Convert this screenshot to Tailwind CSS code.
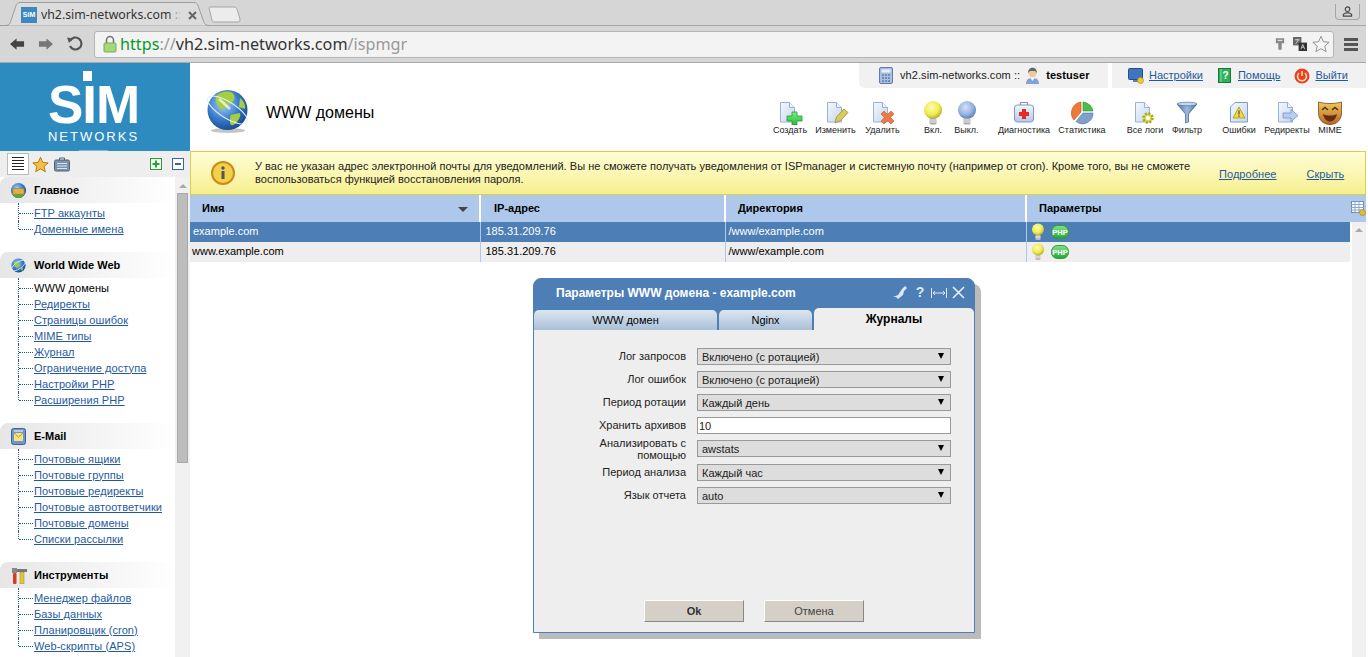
<!DOCTYPE html>
<html lang="ru">
<head>
    <meta charset="UTF-8">
    <meta name="viewport" content="width=device-width, initial-scale=1.0">
    <title>WWW домены</title>
    <script src="https://cdn.jsdelivr.net/npm/@tailwindcss/browser@4"></script>
</head>
<body class="bg-white h-[657px] overflow-hidden font-['Liberation_Sans',sans-serif] text-[11px] text-black">

    <!-- shared icon parts -->
    <svg class="absolute w-0 h-0">
        <defs>
            <linearGradient id="paper" x1="0" y1="0" x2="1" y2="1"><stop offset="0" stop-color="#f4f8fd"/><stop offset="1" stop-color="#c3d6ee"/></linearGradient>
            <radialGradient id="yellowBulb" cx="0.42" cy="0.35" r="0.7"><stop offset="0" stop-color="#fdfdb8"/><stop offset="0.6" stop-color="#efeb4c"/><stop offset="1" stop-color="#a8a21c"/></radialGradient>
            <radialGradient id="blueBulb" cx="0.42" cy="0.35" r="0.7"><stop offset="0" stop-color="#d6e2f6"/><stop offset="0.6" stop-color="#92b2e2"/><stop offset="1" stop-color="#4f72ac"/></radialGradient>
            <radialGradient id="earth" cx="0.4" cy="0.35" r="0.75"><stop offset="0" stop-color="#a8d0f4"/><stop offset="0.55" stop-color="#3377c8"/><stop offset="1" stop-color="#123f80"/></radialGradient>
            <linearGradient id="greenBtn" x1="0" y1="0" x2="0" y2="1"><stop offset="0" stop-color="#86e08a"/><stop offset="1" stop-color="#1fa838"/></linearGradient>
            <linearGradient id="greenCross" x1="0" y1="0" x2="0" y2="1"><stop offset="0" stop-color="#7ff07a"/><stop offset="1" stop-color="#22b83c"/></linearGradient>
            <linearGradient id="silver" x1="0" y1="0" x2="0" y2="1"><stop offset="0" stop-color="#f2f6fc"/><stop offset="1" stop-color="#b3c9ea"/></linearGradient>
            <linearGradient id="funnel" x1="0" y1="0" x2="1" y2="0"><stop offset="0" stop-color="#47709f"/><stop offset="0.5" stop-color="#9dbbe0"/><stop offset="1" stop-color="#47709f"/></linearGradient>
            <linearGradient id="mask" x1="0" y1="0" x2="0" y2="1"><stop offset="0" stop-color="#f0c85c"/><stop offset="1" stop-color="#b06a26"/></linearGradient>
            <symbol id="doc" viewBox="0 0 26 26"><path d="M3.500 3.500h9l5 5v14.500h-14z" fill="url(#paper)" stroke="#9ab2d4"/><path d="M12.500 3.500v5h5" fill="#f2f6fc" stroke="#9ab2d4"/></symbol>
            <symbol id="socket" viewBox="0 0 26 26"><rect x="9.500" y="19" width="7" height="6.500" rx="1.500" fill="#a8a8a8"/><path d="M9.500 21h7M9.500 23h7" stroke="#f0f0f0"/></symbol>
            <symbol id="php" viewBox="0 0 18 14"><rect x="0.500" y="0.500" width="17" height="13" rx="6" fill="url(#greenBtn)" stroke="#2f9a3a"/><text x="9" y="10" text-anchor="middle" font-family="Liberation Sans" font-size="7.500" font-weight="700" fill="#fff">PHP</text></symbol>
            <symbol id="smallbulb" viewBox="0 0 14 18"><circle cx="7" cy="6.500" r="6" fill="url(#yellowBulb)"/><rect x="4.500" y="12" width="5" height="5" rx="1" fill="#bdbdbd"/><path d="M4.500 14h5" stroke="#eee"/></symbol>
        </defs>
    </svg>

    <div class="w-[1366px]">
        <!-- browser chrome -->
        <div class="h-[63px] bg-[#d6d6d6] border-b border-[#a9a9a9]">
            <div class="relative h-[26px] border-b border-[#a8a8a8]">
                <svg class="absolute left-0 top-0" width="250" height="27" viewBox="0 0 250 27">
                    <path d="M0 25.500h6c3 0 4-2 5-5l5-15c1-2 2-3 4-3h174c2 0 3 1 4 3l6 17c1 2 2 3 5 3" fill="#dcdcdc" stroke="#9c9c9c"/>
                    <path d="M209 8c0-1 1-1 2-1h23c2 0 2 1 3 2l3 10c0 2 0 3-2 3h-24c-1 0-2-1-2-2z" fill="#ececec" stroke="#a5a5a5"/>
                </svg>
                <div class="absolute left-[21px] top-[7px] w-4 h-4 bg-[#3d89bf] text-white text-[7px] font-bold leading-4 text-center">SiM</div>
                <div class="absolute left-[41px] top-[6px] w-[140px] overflow-hidden whitespace-nowrap font-['Noto_Sans',sans-serif] text-[12.300px] leading-[18px] text-[#333]">vh2.sim-networks.com :: I</div>
                <div class="absolute left-[168px] top-[6px] w-[13px] h-[18px] bg-gradient-to-r from-transparent to-[#dcdcdc]"></div>
                <svg class="absolute left-[188px] top-[11px]" width="9" height="9" viewBox="0 0 9 9"><path d="M1 1l7 7M8 1l-7 7" stroke="#666" stroke-width="2"/></svg>
                <div class="absolute left-[1335px] top-[4px] w-[25px] h-[16px] border border-t-0 border-[#a5a5a5] rounded-b-[4px] flex items-center justify-center">
                    <svg width="11" height="11" viewBox="0 0 12 12" fill="none" stroke="#444" stroke-width="1.200"><circle cx="6" cy="3.500" r="2.500"/><path d="M1.500 11V9l3-1.500h3l3 1.500v2z"/></svg>
                </div>
            </div>
            <div class="flex items-center h-[36px]">
                <div class="w-[94px] flex items-center pl-[10px]">
                    <svg width="15" height="12" viewBox="0 0 16 12"><path d="M0 6l7-6v3h8v6H7v3z" fill="#444"/></svg>
                    <svg class="ml-[13px]" width="15" height="12" viewBox="0 0 16 12"><path d="M16 6L9 0v3H1v6h8v3z" fill="#777"/></svg>
                    <svg class="ml-[14px]" width="16" height="16" viewBox="0 0 16 16" fill="none"><path d="M3 10a6 6 0 1 0 0-5" stroke="#555" stroke-width="2.200"/><path d="M0 1.500l6 1-4 4.500z" fill="#555"/></svg>
                </div>
                <div class="w-[1240px] h-[27px] bg-[#f3f3f3] border border-[#b5b5b5] rounded-[3px] flex items-center pl-[8px] pr-[3px] font-['Noto_Sans',sans-serif] text-[16.200px]">
                    <svg width="14" height="18" viewBox="0 0 14 18" class="mr-[3px]"><path d="M3.500 8V5a3.500 3.500 0 0 1 7 0v3" fill="none" stroke="#777" stroke-width="1.600"/><rect x="1" y="8" width="12" height="9" rx="1" fill="#a3d977" stroke="#7da85a"/></svg>
                    <span class="text-[#0a9a2a]">https</span><span class="text-[#999]">://</span><span class="text-[#333]">vh2.sim-networks.com</span><span class="text-[#999]">/ispmgr</span>
                    <div class="ml-auto flex items-center">
                        <svg width="10" height="16" viewBox="0 0 12 16"><path d="M1 1h10v6H8v8H4V7H1z" fill="#888"/><rect x="3" y="3" width="6" height="1.500" fill="#ddd"/></svg>
                        <svg class="ml-[8px]" width="14" height="14" viewBox="0 0 15 15"><rect x="0" y="0" width="9" height="9" fill="#666"/><rect x="6" y="6" width="9" height="9" fill="#333"/><path d="M2 3h5M4.500 2v1M3 7l3-4" stroke="#eee" stroke-width=".8"/><path d="M8.500 13l2-5 2 5M9.500 11h2" stroke="#eee" stroke-width=".8" fill="none"/></svg>
                        <svg class="ml-[5px]" width="18" height="18" viewBox="0 0 20 19"><path d="M10 1l2.700 6 6.300.6-4.800 4.200 1.500 6.200L10 14.700 4.300 18l1.500-6.200L1 7.600 7.300 7z" fill="#f6f6f6" stroke="#888"/></svg>
                    </div>
                </div>
                <div class="ml-[10px] flex flex-col gap-[2px]">
                    <div class="w-[14px] h-[3px] bg-[#555]"></div>
                    <div class="w-[14px] h-[3px] bg-[#555]"></div>
                    <div class="w-[14px] h-[3px] bg-[#555]"></div>
                </div>
            </div>
        </div>

        <div class="flex h-[594px]">
            <!-- left menu -->
            <aside class="w-[190px] shrink-0 flex flex-col">
                <div class="relative h-[88px] bg-[#2e8bc0] text-white text-center pr-[3px]">
                    <div class="pt-[18px] text-[53px] font-bold leading-[48px] tracking-[-1px]">SIM</div>
                    <div class="absolute left-[83px] top-[8px] w-[9px] h-[10px] bg-white"></div>
                    <div class="mt-[1px] text-[13px] leading-[14px] tracking-[2px]">NETWORKS</div>
                    <div class="absolute left-[79px] bottom-0 w-[29px] h-px bg-white/40"></div>
                </div>
                <div class="h-[26px] bg-[#eeeeee] flex items-center pl-[7px]">
                    <div class="w-[22px] h-[22px] bg-white border border-[#bbb] flex items-center justify-center">
                        <svg width="14" height="16" viewBox="0 0 14 16" stroke="#222"><path d="M1 1.500h12M1 4.500h12M1 7.500h12M1 10.500h12M1 13.500h12"/></svg>
                    </div>
                    <svg class="ml-[3px]" width="17" height="17" viewBox="0 0 20 19"><path d="M10 1l2.700 6 6.300.6-4.800 4.200 1.500 6.200L10 14.700 4.300 18l1.500-6.200L1 7.600 7.300 7z" fill="#f5c040" stroke="#a86f10"/></svg>
                    <svg class="ml-[5px]" width="16" height="15" viewBox="0 0 16 15"><rect x="0.500" y="3" width="15" height="11" rx="1.500" fill="#7a93ad" stroke="#4e6378"/><path d="M5.500 3V1h5v2" fill="none" stroke="#4e6378"/><path d="M3 6.500h10M3 9h10M3 11.500h10" stroke="#dbe4ee"/></svg>
                    <svg class="ml-[80px]" width="12" height="12" viewBox="0 0 12 12"><rect x="0.500" y="0.500" width="11" height="11" fill="#fff" stroke="#22a52c"/><path d="M2.500 6h7M6 2.500v7" stroke="#22a52c" stroke-width="2"/></svg>
                    <svg class="ml-[10px]" width="12" height="12" viewBox="0 0 12 12"><rect x="0.500" y="0.500" width="11" height="11" fill="#fff" stroke="#3c62a0"/><path d="M3 6h6" stroke="#3c62a0" stroke-width="2"/></svg>
                </div>
                <div class="flex flex-1 min-h-0 overflow-hidden">
                    <nav class="w-[175px] shrink-0 text-[#1f5a9e] tracking-[0.07px]">
                        <div class="h-[26px] rounded-tl-[8px] bg-gradient-to-r from-[#e6e6e6] to-white flex items-center pl-[10px] gap-[7px] font-bold text-black tracking-normal">
                            <svg width="17" height="17" viewBox="0 0 18 18"><circle cx="9" cy="9" r="8" fill="url(#earth)"/><path d="M2 12c3-2 6-1 8 0s4 1 6-1c-1 4-4 6-7 6s-6-2-7-5z" fill="#5da83a"/><rect x="3" y="7" width="12" height="6" rx="1" fill="#e2b04a" stroke="#9a7420" stroke-width=".6"/></svg>
                            <span>Главное</span>
                        </div>
                        <ul class="pt-[2px] mb-[15px]">
                            <li class="relative ml-[18px] pl-px h-4 flex items-center before:absolute before:left-0 before:top-0 before:h-full first:before:top-[-2px] first:before:h-[18px] last:before:h-1/2 before:border-l before:border-dotted before:border-[#1f5a9e]"><span class="w-[14px] border-b border-dotted border-[#1f5a9e] mr-px"></span><a class="underline" href="#">FTP аккаунты</a></li>
                            <li class="relative ml-[18px] pl-px h-4 flex items-center before:absolute before:left-0 before:top-0 before:h-full first:before:top-[-2px] first:before:h-[18px] last:before:h-1/2 before:border-l before:border-dotted before:border-[#1f5a9e]"><span class="w-[14px] border-b border-dotted border-[#1f5a9e] mr-px"></span><a class="underline" href="#">Доменные имена</a></li>
                        </ul>

                        <div class="h-[26px] rounded-tl-[8px] bg-gradient-to-r from-[#e6e6e6] to-white flex items-center pl-[10px] gap-[7px] font-bold text-black tracking-normal">
                            <svg width="17" height="17" viewBox="0 0 18 18"><circle cx="9" cy="9" r="7.500" fill="url(#earth)"/><path d="M4 5l5 1 2 3-3 3-3-2zM11 12l3-1-1 4z" fill="#8fce45"/><ellipse cx="9" cy="9" rx="8.500" ry="3.500" transform="rotate(-35 9 9)" fill="none" stroke="#e8f2ff" stroke-width=".8"/></svg>
                            <span>World Wide Web</span>
                        </div>
                        <ul class="pt-[2px] mb-[15px]">
                            <li class="relative ml-[18px] pl-px h-4 flex items-center before:absolute before:left-0 before:top-0 before:h-full first:before:top-[-2px] first:before:h-[18px] last:before:h-1/2 before:border-l before:border-dotted before:border-[#1f5a9e]"><span class="w-[14px] border-b border-dotted border-[#1f5a9e] mr-px"></span><span class="text-black">WWW домены</span></li>
                            <li class="relative ml-[18px] pl-px h-4 flex items-center before:absolute before:left-0 before:top-0 before:h-full first:before:top-[-2px] first:before:h-[18px] last:before:h-1/2 before:border-l before:border-dotted before:border-[#1f5a9e]"><span class="w-[14px] border-b border-dotted border-[#1f5a9e] mr-px"></span><a class="underline" href="#">Редиректы</a></li>
                            <li class="relative ml-[18px] pl-px h-4 flex items-center before:absolute before:left-0 before:top-0 before:h-full first:before:top-[-2px] first:before:h-[18px] last:before:h-1/2 before:border-l before:border-dotted before:border-[#1f5a9e]"><span class="w-[14px] border-b border-dotted border-[#1f5a9e] mr-px"></span><a class="underline" href="#">Страницы ошибок</a></li>
                            <li class="relative ml-[18px] pl-px h-4 flex items-center before:absolute before:left-0 before:top-0 before:h-full first:before:top-[-2px] first:before:h-[18px] last:before:h-1/2 before:border-l before:border-dotted before:border-[#1f5a9e]"><span class="w-[14px] border-b border-dotted border-[#1f5a9e] mr-px"></span><a class="underline" href="#">MIME типы</a></li>
                            <li class="relative ml-[18px] pl-px h-4 flex items-center before:absolute before:left-0 before:top-0 before:h-full first:before:top-[-2px] first:before:h-[18px] last:before:h-1/2 before:border-l before:border-dotted before:border-[#1f5a9e]"><span class="w-[14px] border-b border-dotted border-[#1f5a9e] mr-px"></span><a class="underline" href="#">Журнал</a></li>
                            <li class="relative ml-[18px] pl-px h-4 flex items-center before:absolute before:left-0 before:top-0 before:h-full first:before:top-[-2px] first:before:h-[18px] last:before:h-1/2 before:border-l before:border-dotted before:border-[#1f5a9e]"><span class="w-[14px] border-b border-dotted border-[#1f5a9e] mr-px"></span><a class="underline" href="#">Ограничение доступа</a></li>
                            <li class="relative ml-[18px] pl-px h-4 flex items-center before:absolute before:left-0 before:top-0 before:h-full first:before:top-[-2px] first:before:h-[18px] last:before:h-1/2 before:border-l before:border-dotted before:border-[#1f5a9e]"><span class="w-[14px] border-b border-dotted border-[#1f5a9e] mr-px"></span><a class="underline" href="#">Настройки PHP</a></li>
                            <li class="relative ml-[18px] pl-px h-4 flex items-center before:absolute before:left-0 before:top-0 before:h-full first:before:top-[-2px] first:before:h-[18px] last:before:h-1/2 before:border-l before:border-dotted before:border-[#1f5a9e]"><span class="w-[14px] border-b border-dotted border-[#1f5a9e] mr-px"></span><a class="underline" href="#">Расширения PHP</a></li>
                        </ul>

                        <div class="h-[26px] rounded-tl-[8px] bg-gradient-to-r from-[#e6e6e6] to-white flex items-center pl-[11px] gap-[8px] font-bold text-black tracking-normal">
                            <svg width="15" height="17" viewBox="0 0 15 17"><rect x="0.500" y="0.500" width="14" height="16" rx="2" fill="#6f96cc" stroke="#3c62a0"/><rect x="3" y="5" width="9" height="8" fill="#f4e27a"/><path d="M3 5l4.500 4L12 5" fill="none" stroke="#b99a20"/><path d="M3 3h9" stroke="#fff"/></svg>
                            <span>E-Mail</span>
                        </div>
                        <ul class="pt-[2px] mb-[15px]">
                            <li class="relative ml-[18px] pl-px h-4 flex items-center before:absolute before:left-0 before:top-0 before:h-full first:before:top-[-2px] first:before:h-[18px] last:before:h-1/2 before:border-l before:border-dotted before:border-[#1f5a9e]"><span class="w-[14px] border-b border-dotted border-[#1f5a9e] mr-px"></span><a class="underline" href="#">Почтовые ящики</a></li>
                            <li class="relative ml-[18px] pl-px h-4 flex items-center before:absolute before:left-0 before:top-0 before:h-full first:before:top-[-2px] first:before:h-[18px] last:before:h-1/2 before:border-l before:border-dotted before:border-[#1f5a9e]"><span class="w-[14px] border-b border-dotted border-[#1f5a9e] mr-px"></span><a class="underline" href="#">Почтовые группы</a></li>
                            <li class="relative ml-[18px] pl-px h-4 flex items-center before:absolute before:left-0 before:top-0 before:h-full first:before:top-[-2px] first:before:h-[18px] last:before:h-1/2 before:border-l before:border-dotted before:border-[#1f5a9e]"><span class="w-[14px] border-b border-dotted border-[#1f5a9e] mr-px"></span><a class="underline" href="#">Почтовые редиректы</a></li>
                            <li class="relative ml-[18px] pl-px h-4 flex items-center before:absolute before:left-0 before:top-0 before:h-full first:before:top-[-2px] first:before:h-[18px] last:before:h-1/2 before:border-l before:border-dotted before:border-[#1f5a9e]"><span class="w-[14px] border-b border-dotted border-[#1f5a9e] mr-px"></span><a class="underline" href="#">Почтовые автоответчики</a></li>
                            <li class="relative ml-[18px] pl-px h-4 flex items-center before:absolute before:left-0 before:top-0 before:h-full first:before:top-[-2px] first:before:h-[18px] last:before:h-1/2 before:border-l before:border-dotted before:border-[#1f5a9e]"><span class="w-[14px] border-b border-dotted border-[#1f5a9e] mr-px"></span><a class="underline" href="#">Почтовые домены</a></li>
                            <li class="relative ml-[18px] pl-px h-4 flex items-center before:absolute before:left-0 before:top-0 before:h-full first:before:top-[-2px] first:before:h-[18px] last:before:h-1/2 before:border-l before:border-dotted before:border-[#1f5a9e]"><span class="w-[14px] border-b border-dotted border-[#1f5a9e] mr-px"></span><a class="underline" href="#">Списки рассылки</a></li>
                        </ul>

                        <div class="h-[26px] rounded-tl-[8px] bg-gradient-to-r from-[#e6e6e6] to-white flex items-center pl-[12px] gap-[7px] font-bold text-black tracking-normal">
                            <svg width="15" height="17" viewBox="0 0 15 17"><rect x="0" y="1" width="5" height="5" fill="#888"/><rect x="1" y="6" width="3.500" height="11" rx="1" fill="#d83a22"/><path d="M5 2h10v3H5z" fill="#777"/><rect x="8" y="5" width="4" height="12" fill="#e0c63a" stroke="#9a8420" stroke-width=".5"/></svg>
                            <span>Инструменты</span>
                        </div>
                        <ul class="pt-[2px]">
                            <li class="relative ml-[18px] pl-px h-4 flex items-center before:absolute before:left-0 before:top-0 before:h-full first:before:top-[-2px] first:before:h-[18px] last:before:h-1/2 before:border-l before:border-dotted before:border-[#1f5a9e]"><span class="w-[14px] border-b border-dotted border-[#1f5a9e] mr-px"></span><a class="underline" href="#">Менеджер файлов</a></li>
                            <li class="relative ml-[18px] pl-px h-4 flex items-center before:absolute before:left-0 before:top-0 before:h-full first:before:top-[-2px] first:before:h-[18px] last:before:h-1/2 before:border-l before:border-dotted before:border-[#1f5a9e]"><span class="w-[14px] border-b border-dotted border-[#1f5a9e] mr-px"></span><a class="underline" href="#">Базы данных</a></li>
                            <li class="relative ml-[18px] pl-px h-4 flex items-center before:absolute before:left-0 before:top-0 before:h-full first:before:top-[-2px] first:before:h-[18px] last:before:h-1/2 before:border-l before:border-dotted before:border-[#1f5a9e]"><span class="w-[14px] border-b border-dotted border-[#1f5a9e] mr-px"></span><a class="underline" href="#">Планировщик (cron)</a></li>
                            <li class="relative ml-[18px] pl-px h-4 flex items-center before:absolute before:left-0 before:top-0 before:h-full first:before:top-[-2px] first:before:h-[18px] last:before:h-1/2 before:border-l before:border-dotted before:border-[#1f5a9e]"><span class="w-[14px] border-b border-dotted border-[#1f5a9e] mr-px"></span><a class="underline" href="#">Web-скрипты (APS)</a></li>
                        </ul>
                    </nav>
                    <div class="flex-1 bg-[#f1f1f1] pl-[2px] pr-[2px]">
                        <div class="h-4 flex items-center justify-center"><div class="mt-[2px] w-0 h-0 border-x-[4px] border-x-transparent border-b-[4px] border-b-[#aaa]"></div></div>
                        <div class="h-[270px] bg-[#bdbdbd] border border-[#a8a8a8]"></div>
                    </div>
                </div>
            </aside>

            <!-- main area -->
            <main class="flex-1 min-w-0 flex flex-col">
                <div class="h-[88px] flex flex-col">
                    <div class="h-[25px] flex justify-end gap-[4px]">
                        <div class="w-[249px] bg-[#f1f1f1] rounded-bl-[6px] flex items-center pl-[20px] text-[#222] tracking-[0.07px]">
                            <svg width="14" height="17" viewBox="0 0 14 17"><rect x="0.500" y="0.500" width="13" height="16" rx="1.500" fill="#a8bfe0" stroke="#5d7db0"/><rect x="2.500" y="2.500" width="9" height="3" fill="#e8f0fa"/><path d="M3 8h2M6 8h2M9 8h2M3 11h2M6 11h2M9 11h2M3 14h2M6 14h2M9 14h2" stroke="#3f5f90"/></svg>
                            <span class="ml-[7px]">vh2.sim-networks.com ::</span>
                            <svg class="ml-[5px]" width="15" height="18" viewBox="0 0 15 18"><path d="M1 17c0-4 2-6 6.500-6s6.500 2 6.500 6z" fill="#7fa3d6"/><path d="M5.500 11l2 3 2-3z" fill="#fff"/><circle cx="7.500" cy="6" r="4.200" fill="#f0c99a"/><path d="M3 6c0-7 9-7 9 0l-2-2H5z" fill="#666"/></svg>
                            <span class="ml-[6px] font-bold text-black">testuser</span>
                        </div>
                        <div class="w-[254px] bg-[#f1f1f1] flex items-center pl-[16px] text-[#1f5a9e]">
                            <svg width="16" height="16" viewBox="0 0 16 16"><rect x="0.500" y="0.500" width="14" height="11" rx="1" fill="#3f74c0" stroke="#284f88"/><rect x="5" y="12" width="5" height="2" fill="#6a7f9a"/><circle cx="12.500" cy="12.500" r="3" fill="#f2c83c" stroke="#a88a18" stroke-width=".6"/></svg>
                            <a class="underline ml-[5px]" href="#">Настройки</a>
                            <svg class="ml-[15px]" width="13" height="15" viewBox="0 0 13 15"><rect x="0.500" y="0.500" width="12" height="14" fill="#2fb05a" stroke="#157a38"/><path d="M3 1v13" stroke="#8fdcaa"/><text x="7.500" y="11" text-anchor="middle" font-family="Liberation Sans" font-size="10" font-weight="700" fill="#fff">?</text></svg>
                            <a class="underline ml-[7px]" href="#">Помощь</a>
                            <svg class="ml-[14px]" width="16" height="16" viewBox="0 0 16 16"><circle cx="8" cy="8" r="7.500" fill="#e8402a"/><path d="M5 5a4.500 4.500 0 1 0 6 0" fill="none" stroke="#ffe6a8" stroke-width="1.500"/><path d="M8 3v5" stroke="#ffe6a8" stroke-width="1.500"/></svg>
                            <a class="underline ml-[5px]" href="#">Выйти</a>
                        </div>
                    </div>
                    <div class="flex-1 flex">
                        <svg class="ml-[15px]" width="46" height="46" viewBox="0 0 46 46">
                            <ellipse cx="23" cy="42.500" rx="17" ry="2.500" fill="#c4c4c4"/>
                            <circle cx="22.500" cy="22" r="20" fill="url(#earth)"/>
                            <path d="M12 7c5-4 15-5 17 0s-2 8-6 10-4 6-7 4-8-10-4-14zM26 27l8-2c3 1 0 7-3 10s-6 3-6-1 0-6 1-7zM35 10c3 2 6 7 5 11l-6-2z" fill="#a6cf3f"/>
                            <ellipse cx="22.500" cy="22" rx="23" ry="8" transform="rotate(32 22.500 22)" fill="none" stroke="#e2eefb" stroke-width="1"/>
                            <path d="M14 11l11 10" stroke="#fff" stroke-width="2.500" opacity=".7"/>
                        </svg>
                        <h1 class="ml-[15px] mt-[15px] h-[20px] text-[16px] leading-[20px] font-normal">WWW домены</h1>
                        <div class="ml-auto mr-[20px] mt-[11px] flex text-[9px] leading-[10px] text-center text-[#222]">
                            <div class="w-[44px] flex flex-col items-center">
                                <svg width="26" height="26" viewBox="0 0 26 26"><use href="#doc"/><path d="M15 13h5v4h5v5h-5v4h-5v-4h-5v-5h5z" fill="url(#greenCross)" stroke="#1f9a38" stroke-width=".8"/></svg>
                                <span>Создать</span>
                            </div>
                            <div class="w-[47px] flex flex-col items-center">
                                <svg width="26" height="26" viewBox="0 0 26 26"><use href="#doc" x="1"/><path d="M12 24l1.500-6L21 10l4 3.500-7.500 8z" fill="#d9cc58" stroke="#9a8e2c" stroke-width=".8"/></svg>
                                <span>Изменить</span>
                            </div>
                            <div class="w-[47px] flex flex-col items-center mr-[10px]">
                                <svg width="26" height="26" viewBox="0 0 26 26"><use href="#doc"/><path d="M11 15l3-3 3.500 3.500L21 12l3 3-3.500 3.500L24 22l-3 3-3.500-3.500L14 25l-3-3 3.500-3.500z" fill="#ec7a44" stroke="#c4552a" stroke-width=".6"/></svg>
                                <span>Удалить</span>
                            </div>
                            <div class="w-[34px] flex flex-col items-center">
                                <svg width="26" height="26" viewBox="0 0 26 26"><circle cx="13" cy="11" r="9" fill="url(#yellowBulb)"/><use href="#socket"/></svg>
                                <span>Вкл.</span>
                            </div>
                            <div class="w-[33px] flex flex-col items-center mr-[11px]">
                                <svg width="26" height="26" viewBox="0 0 26 26"><circle cx="13" cy="11" r="9" fill="url(#blueBulb)"/><use href="#socket"/></svg>
                                <span>Выкл.</span>
                            </div>
                            <div class="w-[60px] flex flex-col items-center">
                                <svg width="26" height="26" viewBox="0 0 26 26"><path d="M9.500 6V3.500h7V6" fill="none" stroke="#7b98c4" stroke-width="1.200"/><rect x="3.500" y="6" width="19" height="17" rx="3" fill="url(#silver)" stroke="#7b98c4"/><path d="M11 10h4v3h3v4h-3v3h-4v-3H8v-4h3z" fill="#e42b25"/></svg>
                                <span>Диагностика</span>
                            </div>
                            <div class="w-[56px] flex flex-col items-center mr-[12px]">
                                <svg width="26" height="26" viewBox="0 0 26 26"><path d="M14 3a11 11 0 0 1 10 9H14z" fill="#4cbf48" stroke="#2c8a34" stroke-width=".6"/><path d="M12 3v10l-7 8A11 11 0 0 1 12 3z" fill="#ee7a3a" stroke="#b8521c" stroke-width=".6"/><path d="M14 14h10a10.500 10.500 0 0 1-17 8.500z" fill="#7f9fcc" stroke="#51709e" stroke-width=".6"/></svg>
                                <span>Статистика</span>
                            </div>
                            <div class="w-[46px] flex flex-col items-center">
                                <svg width="26" height="26" viewBox="0 0 26 26"><use href="#doc"/><circle cx="16" cy="19" r="4.500" fill="#dcdc48" stroke="#a6a426" stroke-width="2.500" stroke-dasharray="2 1.500"/><circle cx="16" cy="19" r="2" fill="#fff"/></svg>
                                <span>Все логи</span>
                            </div>
                            <div class="w-[38px] flex flex-col items-center mr-[12px]">
                                <svg width="26" height="26" viewBox="0 0 26 26"><path d="M3 5l8.500 10v9l3-1v-8L23 5z" fill="url(#funnel)" stroke="#3f6290" stroke-width=".7"/><ellipse cx="13" cy="5" rx="10" ry="1.800" fill="#c5d8ee" stroke="#3f6290" stroke-width=".6"/></svg>
                                <span>Фильтр</span>
                            </div>
                            <div class="w-[42px] flex flex-col items-center">
                                <svg width="26" height="26" viewBox="0 0 26 26"><path d="M9 3.500h12.500v19.500h-17V8z" fill="url(#paper)" stroke="#7f9cc6"/><path d="M13 8l6 11H7z" fill="#f3d83a" stroke="#a08a10" stroke-width=".7"/><path d="M13 11.500v4M13 16.500v1.300" stroke="#333"/></svg>
                                <span>Ошибки</span>
                            </div>
                            <div class="w-[54px] flex flex-col items-center">
                                <svg width="26" height="26" viewBox="0 0 26 26"><use href="#doc" x="1"/><path d="M9 14h8v-3.500l7 6-7 6V19H9z" fill="#b6cfee" stroke="#7596c6" stroke-width=".8"/></svg>
                                <span>Редиректы</span>
                            </div>
                            <div class="w-[32px] flex flex-col items-center">
                                <svg width="26" height="26" viewBox="0 0 26 26"><path d="M1.500 3c7 2 16 2 23 0v11c0 7-5 11.500-11.500 11.500S1.500 21 1.500 14z" fill="url(#mask)" stroke="#80441a" stroke-width=".8"/><path d="M5 11l3-2.500 3 2.500M15 11l3-2.500 3 2.500" fill="none" stroke="#5a2a0a" stroke-width="1.500"/><path d="M6 15c4 2 10 2 14 0-1 5-4 7.500-7 7.500S7 20 6 15z" fill="#6e2a10"/></svg>
                                <span>MIME</span>
                            </div>
                        </div>
                    </div>
                </div>

                <!-- notice -->
                <div class="h-[44px] bg-gradient-to-b from-[#fffdd6] to-[#f6ef8e] border border-[#d8d04a] flex items-center">
                    <svg class="ml-[20px]" width="24" height="24" viewBox="0 0 24 24"><circle cx="12" cy="12" r="11" fill="#f3d04a" stroke="#c98a1e" stroke-width="2"/><circle cx="12" cy="7" r="1.700" fill="#555"/><rect x="10.500" y="10" width="3" height="8" fill="#555"/></svg>
                    <p class="ml-[20px] w-[960px] leading-[13px] text-[#222] tracking-[0.03px]">У вас не указан адрес электронной почты для уведомлений. Вы не сможете получать уведомления от ISPmanager и системную почту (например от cron). Кроме того, вы не сможете воспользоваться функцией восстановления пароля.</p>
                    <a class="underline text-[#1f5a9e] ml-[4px] mt-[2px] tracking-[0.05px]" href="#">Подробнее</a>
                    <a class="underline text-[#1f5a9e] ml-[30px] mt-[2px] tracking-[0.05px]" href="#">Скрыть</a>
                </div>

                <!-- domain list -->
                <div class="flex flex-1 min-h-0">
                    <table class="w-[1160px] h-[67px] table-fixed border-collapse text-left shrink-0">
                        <colgroup><col class="w-[290px]"><col class="w-[245px]"><col class="w-[301px]"><col></colgroup>
                        <thead>
                            <tr class="h-[27px] bg-[#aec8ec] font-bold">
                                <th class="pl-[12px] border-r-2 border-white relative">Имя<div class="absolute right-[11px] top-[12px] w-0 h-0 border-x-[5px] border-x-transparent border-t-[5px] border-t-[#444]"></div></th>
                                <th class="pl-[13px] border-r-2 border-white">IP-адрес</th>
                                <th class="pl-[12px] border-r-2 border-white">Директория</th>
                                <th class="pl-[12px]">Параметры</th>
                            </tr>
                        </thead>
                        <tbody>
                            <tr class="h-[20px] bg-[#4d7eb5] text-white">
                                <td class="pl-[3px] pb-[2px] border-r border-[#aec8ec]">example.com</td>
                                <td class="pl-[5px] pb-[2px] border-r border-[#aec8ec]">185.31.209.76</td>
                                <td class="pl-[3px] pb-[2px] border-r border-[#aec8ec]">/www/example.com</td>
                                <td class="pl-[4px]"><div class="flex items-center gap-[6px]"><svg width="14" height="18"><use href="#smallbulb"/></svg><svg width="18" height="14"><use href="#php"/></svg></div></td>
                            </tr>
                            <tr class="h-[20px] bg-[#eeeeee]">
                                <td class="pl-[2px] pb-[2px] border-r border-[#aec8ec]">www.example.com</td>
                                <td class="pl-[5px] pb-[2px] border-r border-[#aec8ec]">185.31.209.76</td>
                                <td class="pl-[3px] pb-[2px] border-r border-[#aec8ec]">/www/example.com</td>
                                <td class="pl-[4px]"><div class="flex items-center gap-[6px]"><svg width="14" height="18"><use href="#smallbulb"/></svg><svg width="18" height="14"><use href="#php"/></svg></div></td>
                            </tr>
                        </tbody>
                    </table>
                    <div class="w-[16px] flex flex-col">
                        <div class="h-[27px] bg-[#aec8ec] flex items-start justify-end pt-[6px]">
                            <svg width="15" height="15" viewBox="0 0 15 15"><rect x="0.500" y="0.500" width="12" height="11" fill="#fff" stroke="#6d8fc0"/><path d="M0.500 3.500h12M0.500 6.500h12M0.500 9h12M4 0.500v11M8 0.500v11" stroke="#8ba7d0"/><circle cx="11.500" cy="11.500" r="3" fill="#e2bc3a" stroke="#9c7c18" stroke-width=".6"/></svg>
                        </div>
                        <div class="flex-1 ml-[2px] bg-[#f1f1f1] pt-[6px]"><div class="mx-auto w-0 h-0 border-x-[4px] border-x-transparent border-b-[4px] border-b-[#aaa]"></div></div>
                    </div>
                </div>
            </main>
        </div>
    </div>

    <!-- dialog -->
    <div class="absolute left-[533px] top-[278px] w-[442px] h-[355px] flex flex-col bg-[#4d7eb5] rounded-t-[8px] border border-[#4d7eb5] shadow-[6px_6px_0_#bbbbbb]">
        <div class="h-[29px] flex items-center pb-[2px] pl-[22px] pr-[9px] text-white font-bold text-[12px]">
            <span class="flex-1">Параметры WWW домена - example.com</span>
            <svg width="14" height="14" viewBox="0 0 14 14"><path d="M0 11l5-2 4-6 3-3 2 2-3 3-1 4-5 4-2-2z" fill="#dfe8f2"/></svg>
            <span class="ml-[8px] w-[10px] text-center text-[14px] font-bold text-[#dfe8f2]">?</span>
            <svg class="ml-[6px]" width="16" height="10" viewBox="0 0 16 10" fill="none" stroke="#dfe8f2"><path d="M0.500 0v10M15.500 0v10M2 5h12M4 3L2 5l2 2M12 3l2 2-2 2"/></svg>
            <svg class="ml-[5px]" width="13" height="13" viewBox="0 0 13 13"><path d="M1 1l11 11M12 1L1 12" stroke="#f0f4f8" stroke-width="1.500"/></svg>
        </div>
        <div class="flex items-end h-[22px] text-[11px] text-center">
            <div class="w-[183px] h-[20px] leading-[20px] rounded-t-[5px] bg-gradient-to-b from-[#dde6f0] to-[#a9c0d8]">WWW домен</div>
            <div class="w-[93px] h-[20px] ml-[2px] leading-[20px] rounded-t-[5px] bg-gradient-to-b from-[#dde6f0] to-[#a9c0d8]">Nginx</div>
            <div class="flex-1 h-[22px] ml-[2px] leading-[22px] rounded-t-[5px] bg-[#eeeeee] font-bold text-[12px]">Журналы</div>
        </div>
        <form class="flex-1 bg-[#eeeeee] flex flex-col pt-[18px] text-[#222]">
            <div class="flex items-center h-[17px] mb-[6px]">
                <label class="w-[152px] text-right leading-[12px] pl-[42px] mb-[2px]">Лог запросов</label>
                <div class="relative ml-[11px] w-[254px] h-[17px]"><select class="appearance-none w-full h-full bg-[#dddddd] border border-[#999] pl-[4px] text-[11px]"><option>Включено (с ротацией)</option></select><div class="absolute right-[7px] top-[5px] w-0 h-0 border-x-[3px] border-x-transparent border-t-[6px] border-t-black"></div></div>
            </div>
            <div class="flex items-center h-[17px] mb-[6px]">
                <label class="w-[152px] text-right leading-[12px] pl-[42px] mb-[2px]">Лог ошибок</label>
                <div class="relative ml-[11px] w-[254px] h-[17px]"><select class="appearance-none w-full h-full bg-[#dddddd] border border-[#999] pl-[4px] text-[11px]"><option>Включено (с ротацией)</option></select><div class="absolute right-[7px] top-[5px] w-0 h-0 border-x-[3px] border-x-transparent border-t-[6px] border-t-black"></div></div>
            </div>
            <div class="flex items-center h-[17px] mb-[6px]">
                <label class="w-[152px] text-right leading-[12px] pl-[42px] mb-[2px]">Период ротации</label>
                <div class="relative ml-[11px] w-[254px] h-[17px]"><select class="appearance-none w-full h-full bg-[#dddddd] border border-[#999] pl-[4px] text-[11px]"><option>Каждый день</option></select><div class="absolute right-[7px] top-[5px] w-0 h-0 border-x-[3px] border-x-transparent border-t-[6px] border-t-black"></div></div>
            </div>
            <div class="flex items-center h-[17px] mb-[6px]">
                <label class="w-[152px] text-right leading-[12px] pl-[42px] mb-[2px]">Хранить архивов</label>
                <input class="ml-[11px] w-[254px] h-[17px] bg-white border border-[#999] pl-px text-[11px]" type="text" value="10">
            </div>
            <div class="flex items-center h-[17px] mb-[7px]">
                <label class="w-[152px] text-right leading-[12px] pl-[42px]">Анализировать с помощью</label>
                <div class="relative ml-[11px] w-[254px] h-[17px]"><select class="appearance-none w-full h-full bg-[#dddddd] border border-[#999] pl-[4px] text-[11px]"><option>awstats</option></select><div class="absolute right-[7px] top-[5px] w-0 h-0 border-x-[3px] border-x-transparent border-t-[6px] border-t-black"></div></div>
            </div>
            <div class="flex items-center h-[17px] mb-[6px]">
                <label class="w-[152px] text-right leading-[12px] pl-[42px] mb-[2px]">Период анализа</label>
                <div class="relative ml-[11px] w-[254px] h-[17px]"><select class="appearance-none w-full h-full bg-[#dddddd] border border-[#999] pl-[4px] text-[11px]"><option>Каждый час</option></select><div class="absolute right-[7px] top-[5px] w-0 h-0 border-x-[3px] border-x-transparent border-t-[6px] border-t-black"></div></div>
            </div>
            <div class="flex items-center h-[17px]">
                <label class="w-[152px] text-right leading-[12px] pl-[42px] mb-[2px]">Язык отчета</label>
                <div class="relative ml-[11px] w-[254px] h-[17px]"><select class="appearance-none w-full h-full bg-[#dddddd] border border-[#999] pl-[4px] text-[11px]"><option>auto</option></select><div class="absolute right-[7px] top-[5px] w-0 h-0 border-x-[3px] border-x-transparent border-t-[6px] border-t-black"></div></div>
            </div>
            <div class="mt-auto mb-[10px] flex justify-center gap-[20px]">
                <button type="button" class="w-[100px] h-[22px] bg-[#d4d0c8] border border-t-white border-l-white border-b-[#888] border-r-[#888] font-bold text-[#333]">Ok</button>
                <button type="button" class="w-[100px] h-[22px] bg-[#d4d0c8] border border-t-white border-l-white border-b-[#888] border-r-[#888] text-[#444]">Отмена</button>
            </div>
        </form>
    </div>
</body>
</html>
